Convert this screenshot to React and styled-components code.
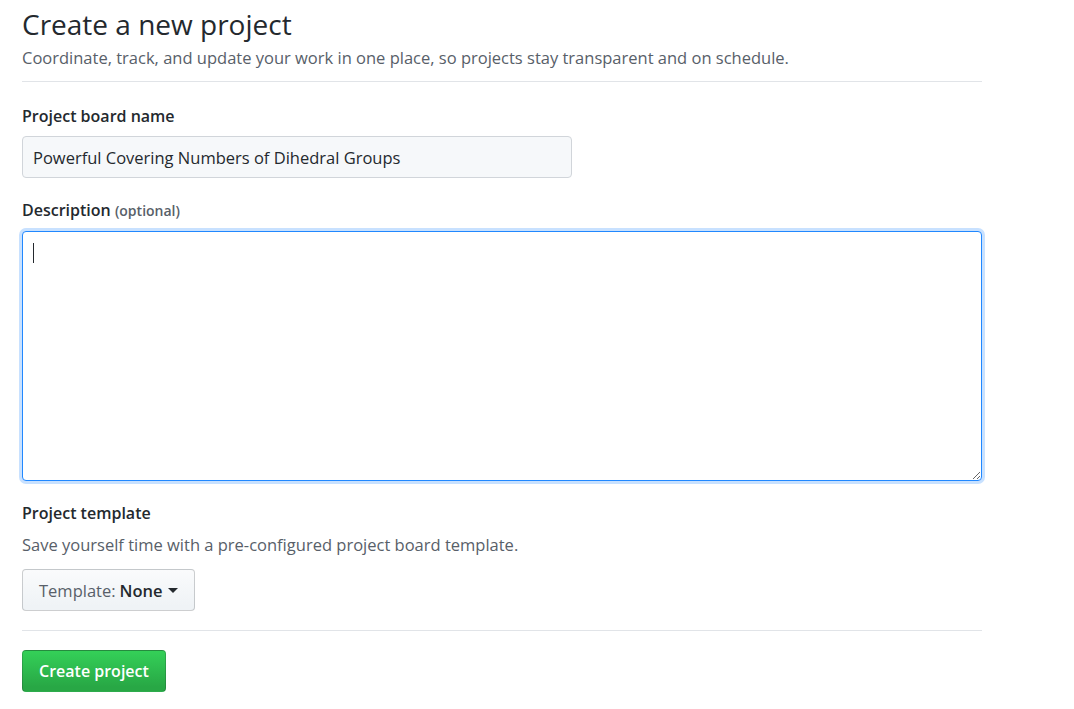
import styled, { createGlobalStyle } from "styled-components";

const GlobalStyle = createGlobalStyle`
  body {
    margin: 0;
    background: #fff;
    font-family: "Open Sans", "Noto Sans", "Liberation Sans", sans-serif;
    color: #24292e;
  }
`;

const App = () => {
  return (
    <>
      <GlobalStyle />
      <Page>
        <Header>
          <Title>Create a new project</Title>
          <Lead>
            Coordinate, track, and update your work in one place, so projects
            stay transparent and on schedule.
          </Lead>
        </Header>

        <Field $first>
          <Label>Project board name</Label>
          <NameInput defaultValue="Powerful Covering Numbers of Dihedral Groups" />
        </Field>

        <Field>
          <Label>
            Description <Optional>(optional)</Optional>
          </Label>
          <AreaWrap>
            <DescArea />
            <Caret />
          </AreaWrap>
        </Field>

        <Field>
          <Label>Project template</Label>
          <Note>Save yourself time with a pre-configured project board template.</Note>
          <SelectButton>
            Template: <strong>None</strong>
            <Arrow />
          </SelectButton>
        </Field>

        <Footer>
          <PrimaryButton>Create project</PrimaryButton>
        </Footer>
      </Page>
    </>
  );
};

//Styled Components

const Page = styled.div`
  width: 960px;
  padding: 0 22px;
`;

const Header = styled.div`
  border-bottom: 1px solid #e1e4e8;
  padding-bottom: 11px;
`;

const Title = styled.h1`
  font-size: 28px;
  font-weight: 400;
  margin: 0;
  padding-top: 4px;
  line-height: 40px;
`;

const Lead = styled.p`
  font-size: 16.5px;
  color: #586069;
  margin: 2px 0 0;
  line-height: 24px;
`;

const Field = styled.div`
  margin-top: ${(p) => (p.$first ? "22px" : "20px")};
`;

const Label = styled.label`
  display: block;
  font-size: 16px;
  font-weight: 600;
  line-height: 24px;
  margin-bottom: 8px;
`;

const Optional = styled.span`
  font-size: 14px;
  color: #586069;
`;

const NameInput = styled.input`
  box-sizing: border-box;
  width: 550px;
  height: 42px;
  padding: 0 10px;
  font-family: inherit;
  font-size: 16.5px;
  color: #24292e;
  background: #f6f8fa;
  border: 1px solid #d1d5da;
  border-radius: 4px;
  outline: none;
`;

const AreaWrap = styled.div`
  position: relative;
`;

const DescArea = styled.textarea`
  display: block;
  box-sizing: border-box;
  width: 960px;
  height: 250px;
  padding: 10px;
  font-family: inherit;
  font-size: 16px;
  background: #fff;
  border: 1px solid #2188ff;
  border-radius: 4px;
  box-shadow: 0 0 0 3px #c8e1ff;
  outline: none;
  resize: vertical;
`;

const Caret = styled.span`
  position: absolute;
  left: 11px;
  top: 12px;
  width: 1px;
  height: 20px;
  background: #24292e;
`;

const Note = styled.p`
  font-size: 16.5px;
  color: #586069;
  margin: 0 0 12px;
  line-height: 24px;
`;

const SelectButton = styled.button`
  display: inline-flex;
  align-items: center;
  gap: 4px;
  height: 42px;
  padding: 0 16px;
  font-family: inherit;
  font-size: 16.5px;
  color: #586069;
  background: linear-gradient(#fafbfc, #eff3f6 90%);
  border: 1px solid rgba(27, 31, 35, 0.2);
  border-radius: 4px;

  strong {
    color: #24292e;
    font-weight: 600;
  }
`;

const Arrow = styled.span`
  width: 0;
  height: 0;
  margin-left: 1px;
  border-left: 5px solid transparent;
  border-right: 5px solid transparent;
  border-top: 5px solid #24292e;
`;

const Footer = styled.div`
  margin-top: 19px;
  padding-top: 19px;
  border-top: 1px solid #e1e4e8;
`;

const PrimaryButton = styled.button`
  height: 42px;
  padding: 0 16px;
  font-family: inherit;
  font-size: 16px;
  font-weight: 600;
  color: #fff;
  background: linear-gradient(#34d058, #28a745 90%);
  border: 1px solid rgba(27, 31, 35, 0.2);
  border-radius: 4px;
`;

export default App;
